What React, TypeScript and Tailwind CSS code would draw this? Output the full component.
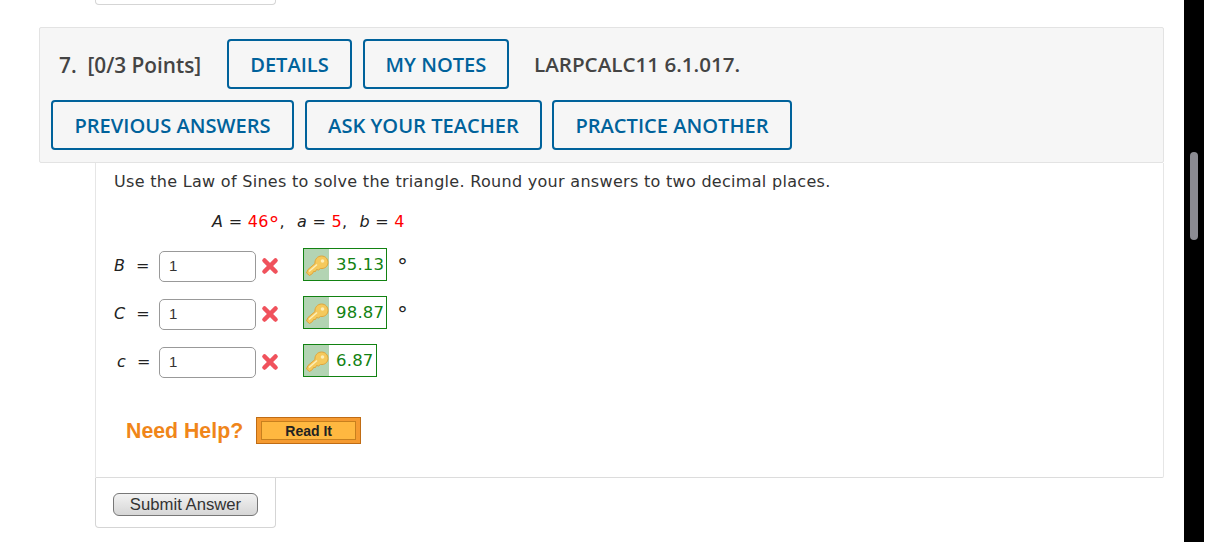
import { X } from "lucide-react";

const btn =
  "flex items-center justify-center h-[50px] rounded-[4px] border-2 border-[#00629b] pt-[2px] text-[#00629b] text-[20.1px] font-semibold";

type Row = { label: string; answer: string; degree: boolean; labelClass: string };

const rows: Row[] = [
  { label: "B", answer: "35.13", degree: true, labelClass: "" },
  { label: "C", answer: "98.87", degree: true, labelClass: "" },
  { label: "c", answer: "6.87", degree: false, labelClass: "pl-[3px]" },
];

function KeyIcon() {
  return (
    <svg width="24" height="24" viewBox="0 0 24 24" aria-hidden="true">
      <path
        d="M1.5 20 L3 16.5 L10 10.5 C9.5 6.5 12.5 3 16.5 3 C20.5 3 23 6 23 9.5 C23 13.5 19.5 16 15.5 15.5 L13.5 17 L11.5 16.5 L10.5 18.5 L8.5 18.5 L7.5 20.5 L4.5 22.5 Z"
        fill="#f5c95c"
        stroke="#e0a53a"
        strokeWidth="1"
      />
      <circle cx="17.5" cy="8" r="1.8" fill="#fdeeb8" />
      <path d="M4 18.5 L12 11.5" stroke="#fdeeb8" strokeWidth="1.5" />
    </svg>
  );
}

function Degree() {
  return <span className="align-[-5px] text-[21px] leading-[0]">°</span>;
}

function AnswerRow({ row }: { row: Row }) {
  return (
    <div className="flex h-[32px] items-center">
      <span className={`w-[45px] text-[#222] ${row.labelClass}`}>
        <i>{row.label}</i>&nbsp;&nbsp;=
      </span>
      <div className="flex h-[31px] w-[97px] items-center rounded-[5px] border border-[#999] pb-[1px] pl-[9px] font-['Liberation_Sans',sans-serif] text-[15px] text-[#333]">
        1
      </div>
      <X className="ml-[3px] text-[#f0525c]" size={22} strokeWidth={5} />
      <div className="ml-[22px] -mt-[3px] flex h-[33px] items-stretch border border-[#128212] text-[16.5px] tracking-[0.2px] text-[#128212]">
        <div className="flex w-[25px] items-center justify-center bg-[#b3d4b3]">
          <KeyIcon />
        </div>
        <div className="flex items-center pl-[7px] pr-[2px]">{row.answer}</div>
      </div>
      {row.degree && (
        <span className="-mt-[4px] ml-[10px] text-[#222]">
          <Degree />
        </span>
      )}
    </div>
  );
}

export default function App() {
  return (
    <div className="flex h-[542px] w-[1209px] overflow-hidden bg-white font-['Open_Sans',sans-serif]">
      <div className="w-[1184px] shrink-0">
        <div className="ml-[95px] h-[5px] w-[181px] rounded-b-[4px] border border-t-0 border-[#d5d5d5]" />

        {/* Question header */}
        <div className="ml-[39px] mt-[22px] h-[136px] w-[1125px] rounded-[2px] border border-[#e3e3e3] bg-[#f6f6f6] pl-[11px] pt-[11px]">
          <div className="flex h-[50px] items-center">
            <span className="ml-[8px] w-[168px] pt-[4px] text-[20.8px] font-semibold text-[#444]">
              7.&nbsp; [0/3 Points]
            </span>
            <div className={`${btn} w-[125px]`}>DETAILS</div>
            <div className={`${btn} ml-[11px] w-[146px]`}>MY NOTES</div>
            <span className="ml-[25px] text-[20.6px] font-semibold text-[#444]">LARPCALC11 6.1.017.</span>
          </div>
          <div className="mt-[11px] flex">
            <div className={`${btn} w-[243px]`}>PREVIOUS ANSWERS</div>
            <div className={`${btn} ml-[11px] w-[237px]`}>ASK YOUR TEACHER</div>
            <div className={`${btn} ml-[10px] w-[240px]`}>PRACTICE ANOTHER</div>
          </div>
        </div>

        {/* Question body */}
        <div className="ml-[95px] h-[315px] w-[1069px] rounded-br-[2px] border-x border-b border-x-[#e6e6e6] border-b-[#dcdcdc] pl-[18px] pt-[9px] font-['DejaVu_Sans',sans-serif] text-[16px] leading-[20px] tracking-[0.3px] text-[#333]">
          <p>Use the Law of Sines to solve the triangle. Round your answers to two decimal places.</p>
          <p className="ml-[98px] mt-[20px] text-[#222]">
            <i>A</i> = <span className="text-[#f00]">46<Degree /></span>,<span className="ml-[12px]"><i>a</i></span> = <span className="text-[#f00]">5</span>,<span className="ml-[12px]"><i>b</i></span> = <span className="text-[#f00]">4</span>
          </p>
          <div className="mt-[18px] flex flex-col gap-[16px]">
            {rows.map((row) => (
              <AnswerRow key={row.label} row={row} />
            ))}
          </div>
          <div className="ml-[12px] mt-[39px] flex items-center">
            <span className="font-['Liberation_Sans',sans-serif] text-[21.3px] font-bold tracking-normal text-[#f0861a]">
              Need Help?
            </span>
            <div className="ml-[13px] flex h-[27px] w-[105px] items-center justify-center border border-[#c06c14] bg-[#f59a30] px-[4px] py-[3px]">
              <div className="flex h-full w-full items-center justify-center border border-[#c8801e] bg-[#ffb840] font-['Liberation_Sans',sans-serif] text-[14px] font-bold tracking-normal text-[#222]">
                Read It
              </div>
            </div>
          </div>
        </div>

        {/* Submit tab */}
        <div className="ml-[95px] flex h-[50px] w-[181px] items-start rounded-b-[4px] border border-t-0 border-[#d5d5d5] pl-[17px] pt-[15px]">
          <div className="flex h-[23px] w-[145px] items-center justify-center rounded-[6px] border border-[#777] bg-gradient-to-b from-[#f2f2f2] to-[#d6d6d6] font-['Liberation_Sans',sans-serif] text-[16.7px] text-[#333]">
            Submit Answer
          </div>
        </div>
      </div>

      {/* Scrollbar */}
      <div className="h-full w-[20px] shrink-0 bg-black pl-[6px] pt-[152px]">
        <div className="h-[88px] w-[8px] rounded-full bg-[#8b8b92]" />
      </div>
      <div className="w-[5px] shrink-0 bg-white" />
    </div>
  );
}
